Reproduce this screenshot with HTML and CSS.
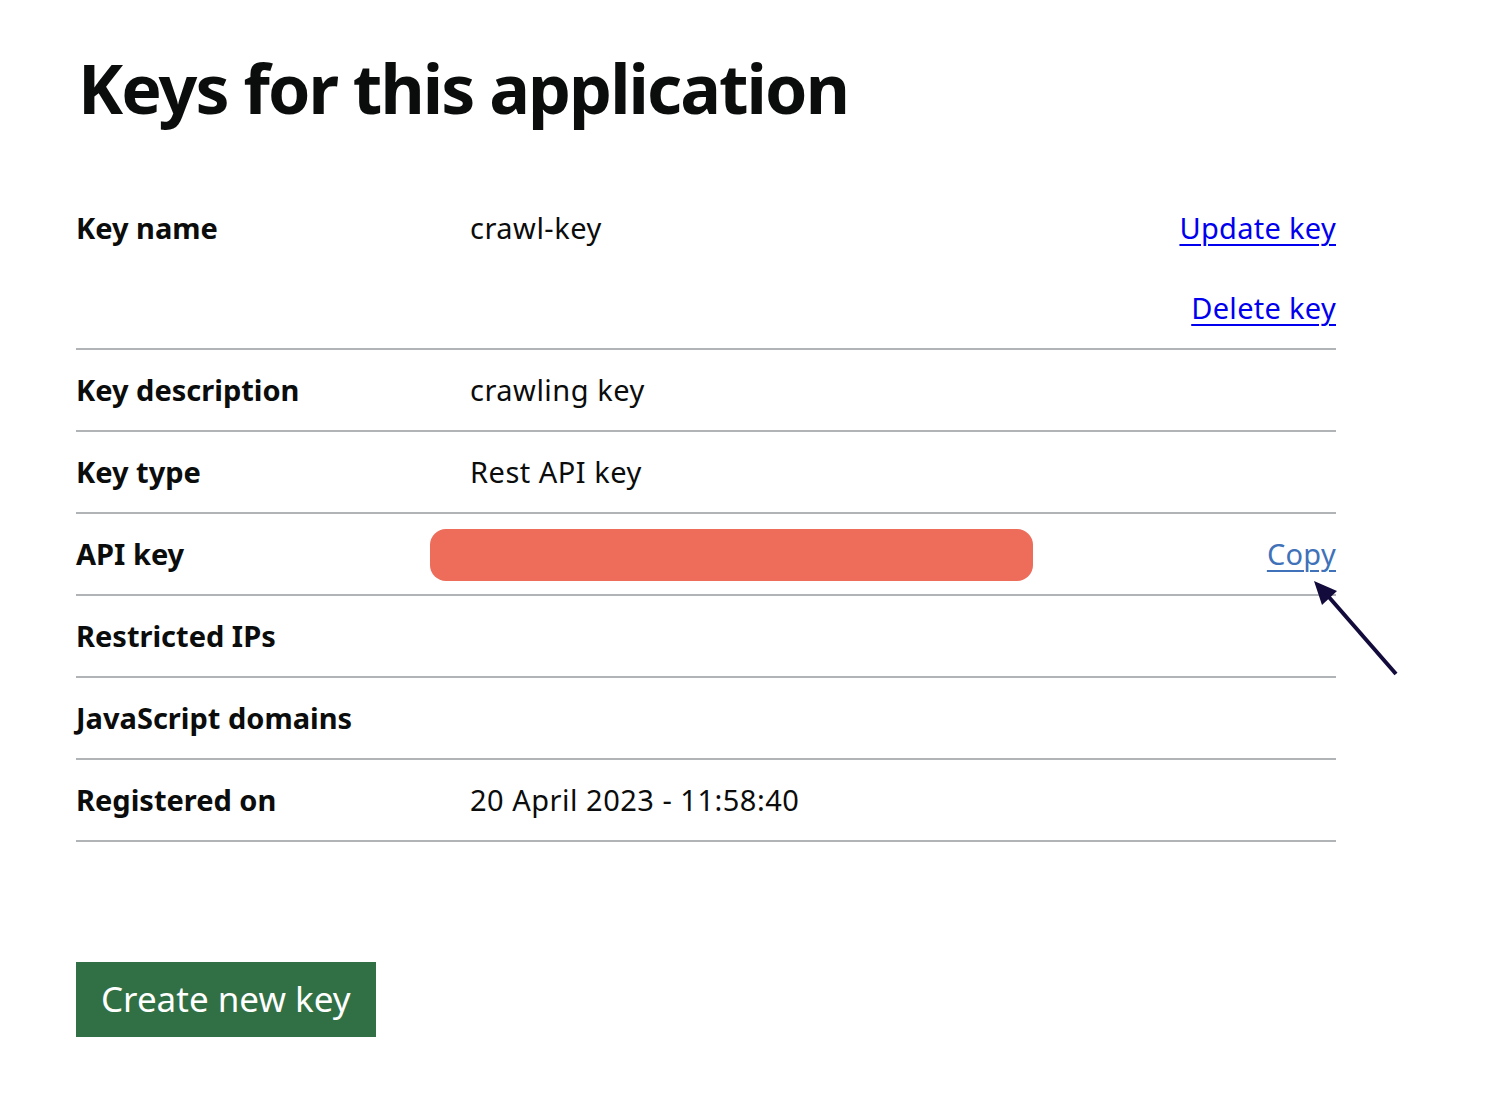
FILE: index.html
```html
<!DOCTYPE html>
<html lang="en">
<head>
<meta charset="utf-8">
<title>Keys for this application</title>
<link rel="stylesheet" href="styles.css">
</head>
<body>
<main class="page">
  <h1 class="title">Keys for this application</h1>
  <dl class="summary">
    <div class="row">
      <dt class="key">Key name</dt>
      <dd class="value">crawl-key</dd>
      <dd class="actions">
        <ul class="action-list">
          <li><a class="link" href="#">Update key</a></li>
          <li><a class="link" href="#">Delete key</a></li>
        </ul>
      </dd>
    </div>
    <div class="row">
      <dt class="key">Key description</dt>
      <dd class="value">crawling key</dd>
      <dd class="actions"></dd>
    </div>
    <div class="row">
      <dt class="key">Key type</dt>
      <dd class="value">Rest API key</dd>
      <dd class="actions"></dd>
    </div>
    <div class="row row-api">
      <dt class="key">API key</dt>
      <dd class="value"><span class="redact"></span></dd>
      <dd class="actions"><a class="link link-copy" href="#">Copy</a></dd>
      <svg class="arrow" width="100" height="110" viewBox="0 0 100 110">
        <line x1="82" y1="93" x2="14" y2="15" stroke="#120b3b" stroke-width="4"/>
        <polygon points="0,0 23,10 8,24" fill="#120b3b"/>
      </svg>
    </div>
    <div class="row">
      <dt class="key">Restricted IPs</dt>
      <dd class="value"></dd>
      <dd class="actions"></dd>
    </div>
    <div class="row">
      <dt class="key">JavaScript domains</dt>
      <dd class="value"></dd>
      <dd class="actions"></dd>
    </div>
    <div class="row">
      <dt class="key">Registered on</dt>
      <dd class="value">20 April 2023 - 11:58:40</dd>
      <dd class="actions"></dd>
    </div>
  </dl>
  <button class="button" type="button">Create new key</button>
</main>
</body>
</html>
```

FILE: styles.css
```css
* { box-sizing: border-box; }
html, body { margin: 0; padding: 0; background: #fff; }
body {
  font-family: "Noto Sans", "Liberation Sans", sans-serif;
  color: #0b0c0c;
}
.page {
  width: 1260px;
  margin-left: 76px;
  padding-top: 44px;
}
.title {
  margin: 0 0 0 2px;
  font-size: 68px;
  line-height: 88px;
  font-weight: 700;
  letter-spacing: -1.9px;
}
.summary {
  margin: 56px 0 0 0;
}
.row {
  position: relative;
  display: flex;
  align-items: flex-start;
  border-bottom: 2px solid #b1b4b6;
  padding: 21px 0 21px;
  font-size: 29px;
  line-height: 38px;
}
.key {
  width: 394px;
  margin: 0;
  font-weight: 700;
  letter-spacing: 0;
}
.value {
  flex: 1;
  margin: 0;
  letter-spacing: 0.5px;
}
.actions {
  margin: 0;
  text-align: right;
  letter-spacing: 0.3px;
}
.action-list {
  list-style: none;
  margin: 0;
  padding: 0;
  display: flex;
  flex-direction: column;
  gap: 42px;
}
.link {
  color: #0000ee;
  text-decoration: underline;
  text-decoration-thickness: 2px;
  text-underline-offset: 5px;
}
.link-copy {
  color: #3f72b9;
}
.redact {
  position: absolute;
  left: 354px;
  top: 15px;
  width: 603px;
  height: 52px;
  border-radius: 16px;
  background: #ed6c5a;
}
.arrow {
  position: absolute;
  left: 1238px;
  top: 67px;
  overflow: visible;
}
.button {
  display: inline-block;
  margin-top: 120px;
  padding: 17px 25px 18px;
  font-family: inherit;
  font-size: 35px;
  line-height: 40px;
  color: #fff;
  background: #317044;
  border: 0;
  border-radius: 0;
  box-shadow: 0 4px 0 #0b2a16;
  letter-spacing: 0;
}
```
